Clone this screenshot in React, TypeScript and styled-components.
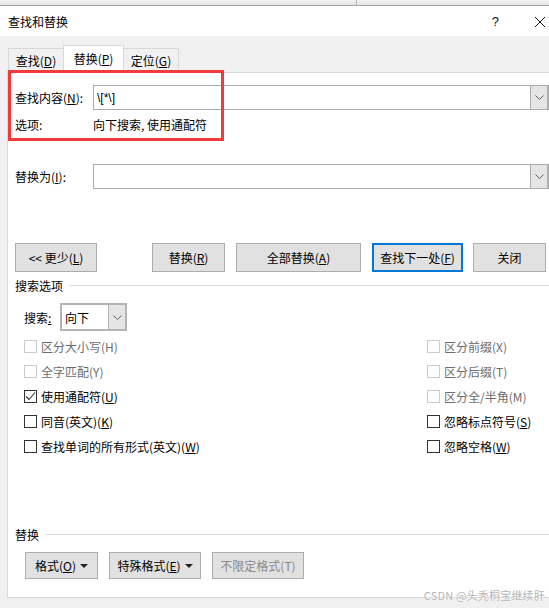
import React from "react";
import styled, { createGlobalStyle } from "styled-components";

const GlobalStyle = createGlobalStyle`
  html, body {
    margin: 0;
    padding: 0;
    background: #f0f0f0;
  }
  body {
    font-family: "Noto Sans CJK SC", "Microsoft YaHei UI", sans-serif;
    font-size: 12px;
    color: #000;
  }
  * {
    box-sizing: border-box;
  }
`;

const Dialog = styled.div`
  position: relative;
  width: 549px;
  height: 608px;
  overflow: hidden;
  background: #f0f0f0;
  display: flex;
  flex-direction: column;
`;

const BehindStrip = styled.div`
  height: 6px;
  background: linear-gradient(#f3f3f3, #e3e3e3);
  border-bottom: 1px solid #a9a9a9;
  display: flex;
`;

const BehindPane = styled.div`
  width: 357px;
  border-right: 1px solid #b8b8b8;
`;

const TitleBar = styled.div`
  height: 30px;
  background: #fff;
  display: flex;
  align-items: center;
  padding: 0 4px 0 8px;
`;

const Title = styled.div`
  flex: 1;
  font-size: 12px;
  line-height: 16px;
  margin-top: 1px;
`;

const HelpMark = styled.div`
  font-family: "Liberation Sans", sans-serif;
  font-size: 13px;
  margin-right: 36px;
  color: #111;
`;

const CloseBox = styled.div`
  width: 10px;
  height: 10px;
  display: flex;
  margin-top: 1px;
`;

const TabStrip = styled.div`
  height: 36px;
  display: flex;
  align-items: flex-end;
  padding-left: 8px;
  position: relative;
  z-index: 1;
`;

const Tab = styled.div<{ $active?: boolean; $w: number }>`
  width: ${(p) => p.$w}px;
  height: ${(p) => (p.$active ? 28 : 24)}px;
  margin-bottom: ${(p) => (p.$active ? -1 : 0)}px;
  margin-left: -1px;
  background: ${(p) => (p.$active ? "#fff" : "#f0f0f0")};
  border: 1px solid #d9d9d9;
  border-bottom: ${(p) => (p.$active ? "none" : "1px solid #d9d9d9")};
  display: flex;
  align-items: center;
  justify-content: center;
  padding-bottom: ${(p) => (p.$active ? 2 : 0)}px;
  &:first-child {
    margin-left: 0;
  }
`;

const Panel = styled.div`
  margin-left: 7px;
  height: 526px;
  background: #fff;
  border-left: 1px solid #d9d9d9;
  border-top: 1px solid #d9d9d9;
  border-bottom: 1px solid #d9d9d9;
  padding-left: 7px;
  display: flex;
  flex-direction: column;
`;

const FieldRow = styled.div<{ $mt: number }>`
  margin-top: ${(p) => p.$mt}px;
  height: 25px;
  display: flex;
  align-items: center;
`;

const FieldLabel = styled.div`
  width: 78px;
  flex-shrink: 0;
`;

const Combo = styled.div`
  flex: 1;
  height: 25px;
  border: 1px solid #ababab;
  border-right: none;
  display: flex;
  align-items: stretch;
  background: #fff;
`;

const ComboText = styled.div`
  flex: 1;
  padding-left: 3px;
  display: flex;
  align-items: center;
  font-family: "Liberation Sans", "Noto Sans CJK SC", sans-serif;
  font-size: 12px;
`;

const ComboButton = styled.div`
  width: 19px;
  border-left: 1px solid #adadad;
  border-right: 2px solid #adadad;
  background: #e5e5e5;
  display: flex;
  align-items: center;
  justify-content: center;
`;

const InfoRow = styled.div`
  margin-top: 5px;
  height: 18px;
  display: flex;
  align-items: center;
`;

const ButtonRow = styled.div<{ $mt: number; $pl: number; $h: number }>`
  margin-top: ${(p) => p.$mt}px;
  padding-left: ${(p) => p.$pl}px;
  height: ${(p) => p.$h}px;
  display: flex;
  gap: 11px;
`;

const Button = styled.div<{ $w: number; $primary?: boolean; $disabled?: boolean; $after?: number }>`
  width: ${(p) => p.$w}px;
  height: 100%;
  flex-shrink: 0;
  background: #e1e1e1;
  border: ${(p) => (p.$primary ? "2px solid #0078d7" : "1px solid #adadad")};
  color: ${(p) => (p.$disabled ? "#8a8a8a" : "#000")};
  margin-right: ${(p) => p.$after ?? 0}px;
  display: flex;
  align-items: center;
  justify-content: center;
  white-space: nowrap;
`;

const Caret = styled.span`
  width: 0;
  height: 0;
  border-left: 4px solid transparent;
  border-right: 4px solid transparent;
  border-top: 4px solid #222;
  margin: 1px 0 0 4px;
`;

const Legend = styled.div<{ $mt: number }>`
  margin-top: ${(p) => p.$mt}px;
  height: 16px;
  display: flex;
  align-items: center;
  &::after {
    content: "";
    flex: 1;
    height: 1px;
    background: #dcdcdc;
    margin-left: 6px;
  }
`;

const SearchRow = styled.div`
  margin-top: 10px;
  padding-left: 9px;
  height: 28px;
  display: flex;
  align-items: center;
`;

const SearchLabel = styled.div`
  width: 36px;
`;

const Select = styled.div`
  width: 67px;
  height: 28px;
  border: 2px solid #b4b4b4;
  display: flex;
  background: #fff;
`;

const SelectText = styled.div`
  flex: 1;
  padding-left: 3px;
  display: flex;
  align-items: center;
`;

const SelectButton = styled.div`
  width: 17px;
  background: #e5e5e5;
  border-left: 1px solid #b4b4b4;
  display: flex;
  align-items: center;
  justify-content: center;
`;

const CheckGrid = styled.div`
  margin-top: 3px;
  padding-left: 9px;
  display: grid;
  grid-template-columns: 403px 1fr;
  grid-auto-rows: 25px;
`;

const CheckItem = styled.div<{ $disabled?: boolean }>`
  display: flex;
  align-items: center;
  color: ${(p) => (p.$disabled ? "#6d6d6d" : "#000")};
  white-space: nowrap;
`;

const Box = styled.span<{ $disabled?: boolean }>`
  width: 13px;
  height: 13px;
  border: 1px solid ${(p) => (p.$disabled ? "#cccccc" : "#333")};
  background: #fff;
  margin-right: 4px;
  display: flex;
  align-items: center;
  justify-content: center;
  flex-shrink: 0;
`;

const RedMark = styled.div`
  position: absolute;
  left: 8px;
  top: 70px;
  width: 216px;
  height: 71px;
  border: 3.5px solid #f23c3c;
  pointer-events: none;
  z-index: 2;
`;

const Watermark = styled.div`
  position: absolute;
  right: 4px;
  bottom: 5px;
  font-size: 11px;
  color: #b5b5b5;
  text-shadow: 0 0 2px #fff, 0 0 1px #fff;
  letter-spacing: 0.2px;
`;

const Chevron = () => (
  <svg width="9" height="5" viewBox="0 0 9 5">
    <path d="M0.5 0.5 L4.5 4.5 L8.5 0.5" fill="none" stroke="#606060" strokeWidth="1" />
  </svg>
);

const Tick = () => (
  <svg width="11" height="11" viewBox="0 0 11 11">
    <path d="M1 5.5 L4 8.5 L10 1.5" fill="none" stroke="#333" strokeWidth="1.1" />
  </svg>
);

type Check = { label: React.ReactNode; disabled?: boolean; checked?: boolean };

const checks: Check[] = [
  { label: <>区分大小写(H)</>, disabled: true },
  { label: <>区分前缀(X)</>, disabled: true },
  { label: <>全字匹配(Y)</>, disabled: true },
  { label: <>区分后缀(T)</>, disabled: true },
  { label: <>使用通配符(<u>U</u>)</>, checked: true },
  { label: <>区分全/半角(M)</>, disabled: true },
  { label: <>同音(英文)(<u>K</u>)</> },
  { label: <>忽略标点符号(<u>S</u>)</> },
  { label: <>查找单词的所有形式(英文)(<u>W</u>)</> },
  { label: <>忽略空格(<u>W</u>)</> },
];

export default function App() {
  return (
    <>
      <GlobalStyle />
      <Dialog>
        <BehindStrip>
          <BehindPane />
        </BehindStrip>
        <TitleBar>
          <Title>查找和替换</Title>
          <HelpMark>?</HelpMark>
          <CloseBox>
            <svg width="10" height="10" viewBox="0 0 10 10">
              <path d="M0 0 L10 10 M10 0 L0 10" stroke="#111" strokeWidth="1" />
            </svg>
          </CloseBox>
        </TitleBar>

        <TabStrip>
          <Tab $w={56}>
            <span>查找(<u>D</u>)</span>
          </Tab>
          <Tab $w={61} $active>
            <span>替换(<u>P</u>)</span>
          </Tab>
          <Tab $w={56}>
            <span>定位(<u>G</u>)</span>
          </Tab>
        </TabStrip>

        <Panel>
          <FieldRow $mt={12}>
            <FieldLabel>查找内容(<u>N</u>):</FieldLabel>
            <Combo>
              <ComboText>\[*\]</ComboText>
              <ComboButton>
                <Chevron />
              </ComboButton>
            </Combo>
          </FieldRow>

          <InfoRow>
            <FieldLabel>选项:</FieldLabel>
            <div>向下搜索, 使用通配符</div>
          </InfoRow>

          <FieldRow $mt={31}>
            <FieldLabel>替换为(<u>I</u>):</FieldLabel>
            <Combo>
              <ComboText />
              <ComboButton>
                <Chevron />
              </ComboButton>
            </Combo>
          </FieldRow>

          <ButtonRow $mt={54} $pl={0} $h={29}>
            <Button $w={82} $after={44}>
              <span>&lt;&lt; 更少(<u>L</u>)</span>
            </Button>
            <Button $w={73}>
              <span>替换(<u>R</u>)</span>
            </Button>
            <Button $w={125}>
              <span>全部替换(<u>A</u>)</span>
            </Button>
            <Button $w={91} $primary $after={-1}>
              <span>查找下一处(<u>F</u>)</span>
            </Button>
            <Button $w={73}>
              <span>关闭</span>
            </Button>
          </ButtonRow>

          <Legend $mt={5}>搜索选项</Legend>

          <SearchRow>
            <SearchLabel>
              搜索<u>:</u>
            </SearchLabel>
            <Select>
              <SelectText>向下</SelectText>
              <SelectButton>
                <Chevron />
              </SelectButton>
            </Select>
          </SearchRow>

          <CheckGrid>
            {checks.map((c, i) => (
              <CheckItem key={i} $disabled={c.disabled}>
                <Box $disabled={c.disabled}>{c.checked && <Tick />}</Box>
                <span>{c.label}</span>
              </CheckItem>
            ))}
          </CheckGrid>

          <Legend $mt={67}>替换</Legend>

          <ButtonRow $mt={10} $pl={10} $h={27}>
            <Button $w={73}>
              <span>格式(<u>O</u>)</span>
              <Caret />
            </Button>
            <Button $w={92}>
              <span>特殊格式(<u>E</u>)</span>
              <Caret />
            </Button>
            <Button $w={92} $disabled>
              <span>不限定格式(T)</span>
            </Button>
          </ButtonRow>
        </Panel>

        <RedMark />
        <Watermark>CSDN @头秃桐宝继续肝</Watermark>
      </Dialog>
    </>
  );
}
